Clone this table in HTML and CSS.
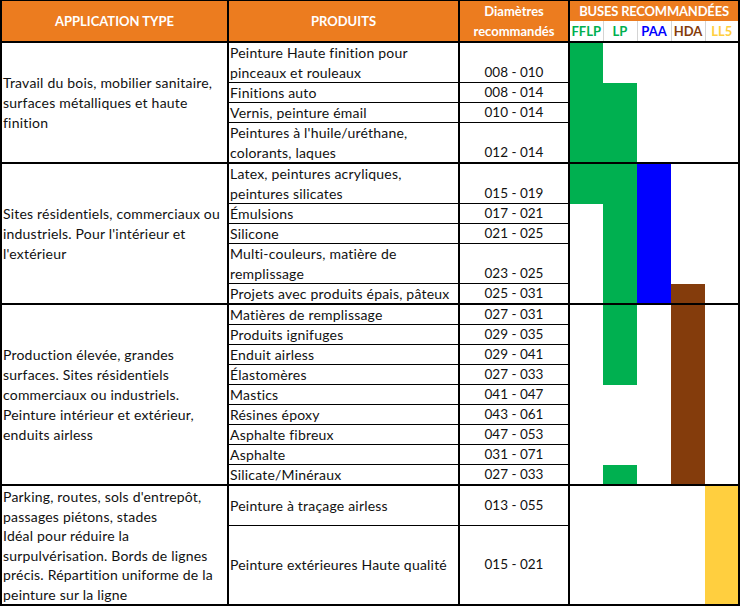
FILE: index.html
```html
<!DOCTYPE html>
<html lang="fr">
<head>
<meta charset="utf-8">
<title>Buses recommandées</title>
<link rel="stylesheet" href="styles.css">
</head>
<body>
<table class="grid">
  <colgroup>
    <col class="c-app"><col class="c-prod"><col class="c-diam">
    <col class="c-bus"><col class="c-bus"><col class="c-bus"><col class="c-bus"><col class="c-bus">
  </colgroup>
  <thead>
    <tr class="hh">
      <th rowspan="2" class="app">APPLICATION TYPE</th>
      <th rowspan="2" class="prod">PRODUITS</th>
      <th rowspan="2" class="diam">Diamètres<br>recommandés</th>
      <th colspan="5" class="buses">BUSES RECOMMANDÉES</th>
    </tr>
    <tr class="hh">
      <th class="sub first t-fflp">FFLP</th>
      <th class="sub t-lp">LP</th>
      <th class="sub t-paa">PAA</th>
      <th class="sub t-hda">HDA</th>
      <th class="sub last t-ll5">LL5</th>
    </tr>
  </thead>
  <tbody>
    <!-- Group 1 -->
    <tr class="gs h2">
      <td rowspan="4" class="app">Travail du bois, mobilier sanitaire,<br>surfaces métalliques et haute<br>finition</td>
      <td class="prod two">Peinture Haute finition pour<br>pinceaux et rouleaux</td>
      <td class="diam">008 - 010</td>
      <td rowspan="4" class="bus first green"></td>
      <td class="bus"></td>
      <td rowspan="4" class="bus"></td>
      <td rowspan="4" class="bus"></td>
      <td rowspan="4" class="bus last"></td>
    </tr>
    <tr class="h1">
      <td class="prod">Finitions auto</td>
      <td class="diam">008 - 014</td>
      <td rowspan="3" class="bus green"></td>
    </tr>
    <tr class="h1">
      <td class="prod">Vernis, peinture émail</td>
      <td class="diam">010 - 014</td>
    </tr>
    <tr class="h2">
      <td class="prod two">Peintures à l'huile/uréthane,<br>colorants, laques</td>
      <td class="diam">012 - 014</td>
    </tr>
    <!-- Group 2 -->
    <tr class="gs h2">
      <td rowspan="5" class="app">Sites résidentiels, commerciaux ou<br>industriels. Pour l'intérieur et<br>l'extérieur</td>
      <td class="prod two">Latex, peintures acryliques,<br>peintures silicates</td>
      <td class="diam">015 - 019</td>
      <td class="bus first green"></td>
      <td rowspan="5" class="bus green"></td>
      <td rowspan="5" class="bus blue"></td>
      <td rowspan="4" class="bus"></td>
      <td rowspan="5" class="bus last"></td>
    </tr>
    <tr class="h1">
      <td class="prod">Émulsions</td>
      <td class="diam">017 - 021</td>
      <td rowspan="4" class="bus first"></td>
    </tr>
    <tr class="h1">
      <td class="prod">Silicone</td>
      <td class="diam">021 - 025</td>
    </tr>
    <tr class="h2">
      <td class="prod two">Multi-couleurs, matière de<br>remplissage</td>
      <td class="diam">023 - 025</td>
    </tr>
    <tr class="h1">
      <td class="prod">Projets avec produits épais, pâteux</td>
      <td class="diam">025 - 031</td>
      <td class="bus brown"></td>
    </tr>
    <!-- Group 3 -->
    <tr class="gs h1">
      <td rowspan="9" class="app">Production élevée, grandes<br>surfaces. Sites résidentiels<br>commerciaux ou industriels.<br>Peinture intérieur et extérieur,<br>enduits airless</td>
      <td class="prod">Matières de remplissage</td>
      <td class="diam">027 - 031</td>
      <td rowspan="9" class="bus first"></td>
      <td rowspan="4" class="bus green"></td>
      <td rowspan="9" class="bus"></td>
      <td rowspan="9" class="bus brown"></td>
      <td rowspan="9" class="bus last"></td>
    </tr>
    <tr class="h1">
      <td class="prod">Produits ignifuges</td>
      <td class="diam">029 - 035</td>
    </tr>
    <tr class="h1">
      <td class="prod">Enduit airless</td>
      <td class="diam">029 - 041</td>
    </tr>
    <tr class="h1">
      <td class="prod">Élastomères</td>
      <td class="diam">027 - 033</td>
    </tr>
    <tr class="h1">
      <td class="prod">Mastics</td>
      <td class="diam">041 - 047</td>
      <td rowspan="4" class="bus"></td>
    </tr>
    <tr class="h1">
      <td class="prod">Résines époxy</td>
      <td class="diam">043 - 061</td>
    </tr>
    <tr class="h1">
      <td class="prod">Asphalte fibreux</td>
      <td class="diam">047 - 053</td>
    </tr>
    <tr class="h1">
      <td class="prod">Asphalte</td>
      <td class="diam">031 - 071</td>
    </tr>
    <tr class="h1">
      <td class="prod">Silicate/Minéraux</td>
      <td class="diam">027 - 033</td>
      <td class="bus green"></td>
    </tr>
    <!-- Group 4 -->
    <tr class="gs h2">
      <td rowspan="2" class="app top">Parking, routes, sols d'entrepôt,<br>passages piétons, stades<br>Idéal pour réduire la<br>surpulvérisation. Bords de lignes<br>précis. Répartition uniforme de la<br>peinture sur la ligne</td>
      <td class="prod mid">Peinture à traçage airless</td>
      <td class="diam mid">013 - 055</td>
      <td rowspan="2" colspan="4" class="bus first"></td>
      <td rowspan="2" class="bus last yellow"></td>
    </tr>
    <tr class="h4">
      <td class="prod mid">Peinture extérieures Haute qualité</td>
      <td class="diam mid">015 - 021</td>
    </tr>
  </tbody>
</table>
</body>
</html>
```

FILE: styles.css
```css
html, body {
  margin: 0;
  padding: 0;
  background: #ffffff;
}

.grid {
  border-collapse: collapse;
  table-layout: fixed;
  width: 740px;
  font-family: "Lato", "Liberation Sans", sans-serif;
  font-size: 14px;
  letter-spacing: 0.2px;
  line-height: 19px;
  color: #111111;
}

.c-app { width: 227px; }
.c-prod { width: 231px; }
.c-diam { width: 110px; }
.c-bus { width: 34px; }

.grid th,
.grid td {
  padding: 0;
  white-space: nowrap;
  overflow: hidden;
}

.hh { height: 20px; }
.h1 { height: 19px; }
.h2 { height: 39px; }
.h4 { height: 79px; }
.gs.h1 { height: 20px; }
.gs.h2 { height: 40px; }

/* header */
.grid thead th {
  background: #ec7c1f;
  color: #ffffff;
  font-size: 13px;
  letter-spacing: 0;
  font-weight: 700;
  text-align: center;
  vertical-align: middle;
  border-top: 1px solid #000;
  border-bottom: 2px solid #000;
  border-left: 2px solid #000;
  border-right: 2px solid #000;
}

.grid thead th.diam { line-height: 20px; }

.grid thead th.buses {
  border-bottom: none;
  letter-spacing: -0.2px;
}

.grid thead th.sub {
  background: #ffffff;
  border-top: none;
  border-left: 1px solid #d4d4d4;
  border-right: 1px solid #d4d4d4;
}

.grid thead th.sub.first { border-left: 2px solid #000; }
.grid thead th.sub.last { border-right: 2px solid #000; }

.grid thead th.t-fflp,
.grid thead th.t-lp { color: #00b050; }
.grid thead th.t-paa { color: #0000ff; }
.grid thead th.t-hda { color: #843c0c; }
.grid thead th.t-ll5 { color: #ffcf3f; }

/* body */
.grid td {
  background: #ffffff;
  border-left: 2px solid #000;
  border-right: 2px solid #000;
}

.grid td.app {
  text-align: left;
  vertical-align: middle;
  padding-left: 1px;
  line-height: 20px;
}

.grid td.app.top {
  vertical-align: top;
  line-height: 19.5px;
  padding-top: 1px;
}

.grid td.prod {
  text-align: left;
  vertical-align: bottom;
  padding-left: 1px;
  border-bottom: 1px solid #000;
}

.grid td.prod.two { line-height: 19.5px; }

.grid td.diam {
  text-align: center;
  vertical-align: bottom;
  font-size: 13.5px;
  letter-spacing: 0;
  border-bottom: 1px solid #000;
}

.grid td.mid { vertical-align: middle; }

.grid td.bus {
  border-left: none;
  border-right: none;
}

.grid td.bus.first { border-left: 2px solid #000; }
.grid td.bus.last { border-right: 2px solid #000; }

.grid tr.gs > td { border-top: 2px solid #000; }
.grid tbody tr:last-child > td,
.grid td.app.top,
.grid td.bus[rowspan="2"] { border-bottom: 2px solid #000; }

.green { background: #00b050 !important; }
.blue { background: #0000ff !important; }
.brown { background: #843c0c !important; }
.yellow { background: #ffcf3f !important; }
```
